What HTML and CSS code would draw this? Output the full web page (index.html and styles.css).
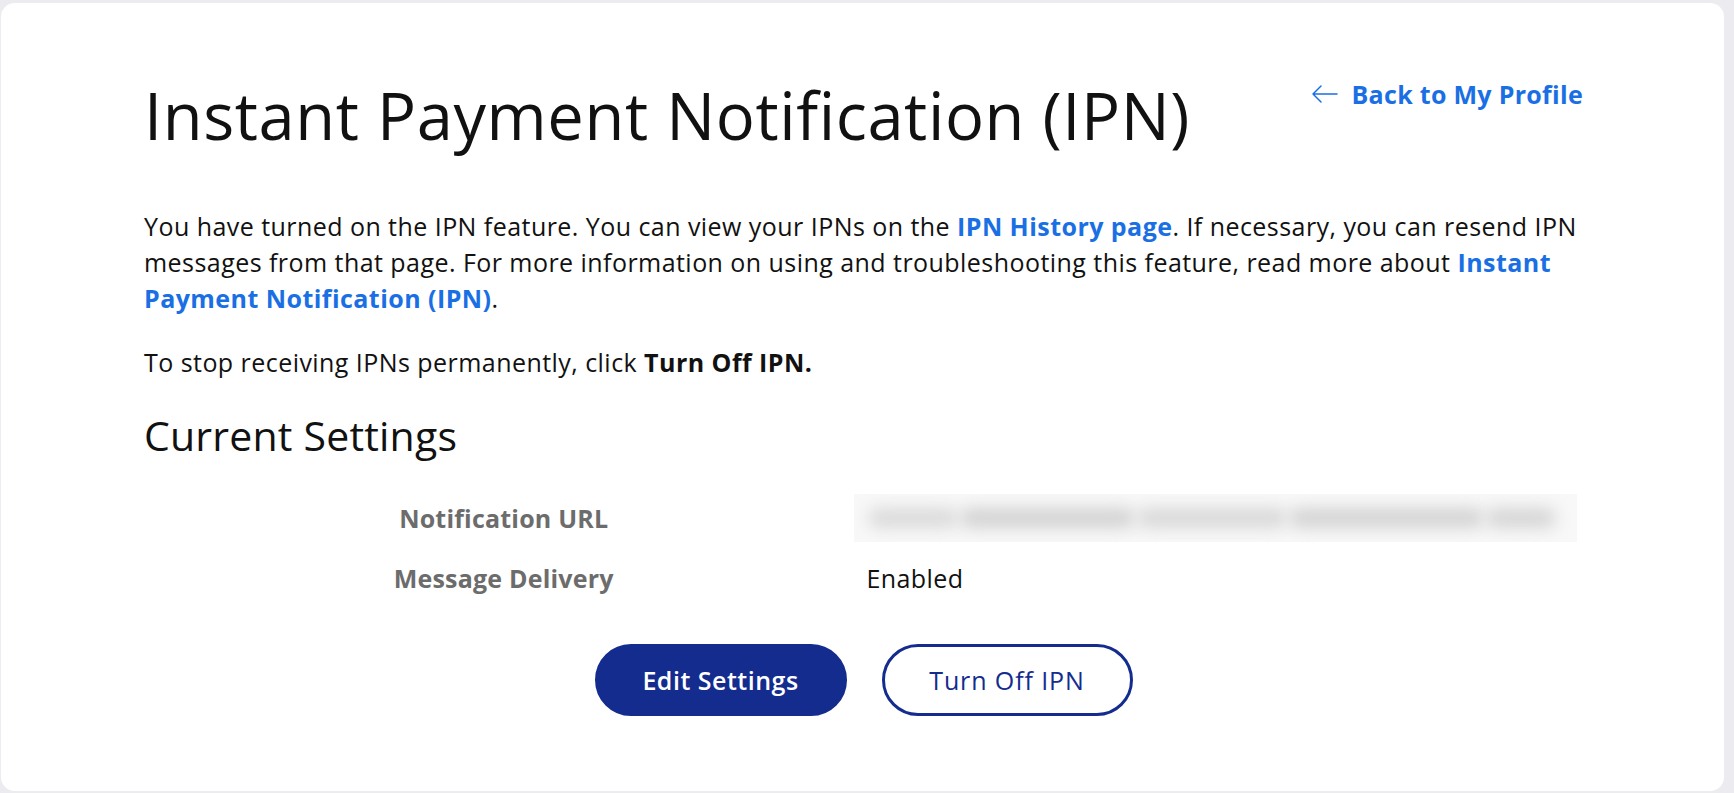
FILE: index.html
```html
<!DOCTYPE html>
<html lang="en">
<head>
<meta charset="utf-8">
<title>Instant Payment Notification (IPN)</title>
<link rel="stylesheet" href="styles.css">
</head>
<body>
<div class="page">
  <main class="card">
    <div class="content">
      <header class="header">
        <h1 class="title">Instant Payment Notification (IPN)</h1>
        <a class="back-link" href="#">
          <svg class="back-arrow" width="27" height="20" viewBox="0 0 27 20" aria-hidden="true">
            <path d="M26 10H2M10 2L2 10l8 8" fill="none" stroke="#1a6fe4" stroke-width="1.5" stroke-linecap="round" stroke-linejoin="round"/>
          </svg>
          <span>Back to My Profile</span>
        </a>
      </header>

      <p class="intro">You have turned on the IPN feature. You can view your IPNs on the <a class="link" href="#">IPN History page</a>. If necessary, you can resend IPN messages from that page. For more information on using and troubleshooting this feature, read more about <a class="link" href="#">Instant Payment Notification (IPN)</a>.</p>

      <p class="stop">To stop receiving IPNs permanently, click <strong>Turn Off IPN.</strong></p>

      <h2 class="subtitle">Current Settings</h2>

      <div class="settings">
        <div class="label">Notification URL</div>
        <div class="value">
          <div class="redacted">
            <span class="smudge s1"></span>
            <span class="smudge s2"></span>
            <span class="smudge s3"></span>
            <span class="smudge s4"></span>
            <span class="smudge s5"></span>
          </div>
        </div>
        <div class="label">Message Delivery</div>
        <div class="value">Enabled</div>
      </div>

      <div class="actions">
        <button class="btn btn-primary" type="button">Edit Settings</button>
        <button class="btn btn-secondary" type="button">Turn Off IPN</button>
      </div>
    </div>
  </main>
</div>
</body>
</html>
```

FILE: styles.css
```css
* {
  box-sizing: border-box;
}

html, body {
  margin: 0;
  padding: 0;
  background: #ececf0;
}

body {
  font-family: "Open Sans", "Noto Sans", sans-serif;
  color: #111;
}

.page {
  padding: 3px 10px 0 1px;
  height: 793px;
  overflow: hidden;
}

.card {
  background: #fff;
  border-radius: 14px;
  height: 788px;
  padding-top: 73px;
}

.content {
  width: 1439px;
  margin: 0 0 0 143px;
}

.header {
  display: flex;
  justify-content: space-between;
  align-items: flex-start;
}

.title {
  margin: 0;
  font-size: 65px;
  line-height: 78px;
  font-weight: 400;
  color: #111;
  letter-spacing: 0.6px;
}

.back-link {
  display: flex;
  align-items: center;
  gap: 14px;
  margin-top: 3px;
  color: #1a6fe4;
  text-decoration: none;
  font-size: 25px;
  font-weight: 700;
  line-height: 30px;
  letter-spacing: 0.3px;
}

.back-arrow {
  display: block;
}

.intro {
  margin: 54px -6px 0 0;
  font-size: 25px;
  line-height: 36px;
  letter-spacing: 0.45px;
  color: #111;
}

.link {
  color: #1a6fe4;
  font-weight: 700;
  text-decoration: none;
}

.stop {
  margin: 28px 0 0;
  font-size: 25px;
  line-height: 36px;
  letter-spacing: 0.45px;
  color: #111;
}

.stop strong {
  font-weight: 700;
}

.subtitle {
  margin: 31px 0 0;
  font-size: 41px;
  line-height: 48px;
  font-weight: 400;
  letter-spacing: 0.2px;
  color: #111;
}

.settings {
  display: grid;
  grid-template-columns: 1fr 1fr;
  row-gap: 12px;
  margin-top: 35px;
}

.label {
  display: flex;
  align-items: center;
  justify-content: center;
  height: 48px;
  font-size: 25px;
  font-weight: 700;
  letter-spacing: 0.2px;
  color: #6c6c6c;
}

.value {
  display: flex;
  align-items: center;
  height: 48px;
  font-size: 25px;
  letter-spacing: 0.4px;
  color: #111;
  padding-left: 3px;
}

.redacted {
  margin-left: -13px;
  width: 723px;
  height: 48px;
  background: #f8f8f8;
  overflow: hidden;
  display: flex;
  align-items: center;
  gap: 2px;
  padding: 0 14px;
}

.smudge {
  display: block;
  height: 20px;
  background: #d3d3d3;
  border-radius: 10px;
  filter: blur(8px);
}

.s1 { width: 90px; background: #dadada; }
.s2 { width: 175px; background: #d2d2d2; }
.s3 { width: 150px; background: #d8d8d8; }
.s4 { width: 195px; background: #d3d3d3; }
.s5 { width: 70px; background: #d5d5d5; }

.actions {
  display: flex;
  justify-content: center;
  gap: 35px;
  margin-top: 42px;
}

.btn {
  height: 72px;
  border-radius: 36px;
  padding: 0;
  font-family: "Open Sans", "Noto Sans", sans-serif;
  font-size: 25px;
  border: 2px solid #142c8e;
  cursor: pointer;
}

.btn-primary {
  width: 252px;
  background: #142c8e;
  color: #fff;
  font-weight: 600;
  letter-spacing: 0.5px;
}

.btn-secondary {
  width: 251px;
  background: #fff;
  color: #142c8e;
  font-weight: 500;
  letter-spacing: 0.9px;
  border-width: 3px;
}
```
